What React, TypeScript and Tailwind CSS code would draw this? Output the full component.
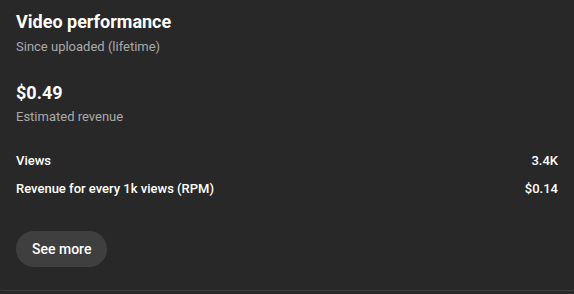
export default function App() {
  return (
    <div className="w-[574px] h-[294px] overflow-hidden bg-[#282828]" style={{ fontFamily: "Roboto, 'Liberation Sans', sans-serif" }}>
      <div className="-mx-[8px] h-[291px] rounded-b-[12px] border-b border-x border-[#3d3d3d] px-[23px] pt-[10px]">
        <div className="text-[18px] font-bold leading-[24px] text-white">Video performance</div>
        <div className="mt-[4px] text-[13px] leading-[18px] text-[#aaaaaa]">Since uploaded (lifetime)</div>
        <div className="mt-[25px] text-[18px] font-bold leading-[24px] text-white">$0.49</div>
        <div className="mt-[3px] text-[13px] leading-[18px] text-[#aaaaaa]">Estimated revenue</div>
        <div className="mt-[26px] flex flex-col gap-[10px]">
          <div className="flex justify-between text-[13px] font-medium leading-[18px] text-white">
            <span>Views</span>
            <span>3.4K</span>
          </div>
          <div className="flex justify-between text-[13px] font-medium leading-[18px] text-white">
            <span>Revenue for every 1k views (RPM)</span>
            <span>$0.14</span>
          </div>
        </div>
        <button className="mt-[33px] h-[36px] rounded-full bg-[#3f3f3f] px-[16px] text-[14px] font-medium text-white">See more</button>
      </div>
    </div>
  );
}
